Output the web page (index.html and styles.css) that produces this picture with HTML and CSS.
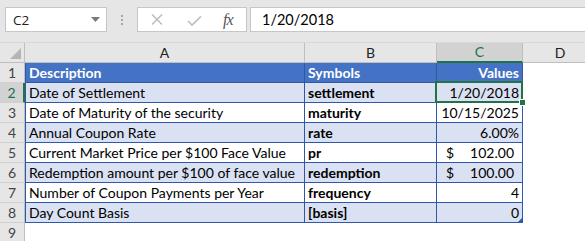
FILE: index.html
```html
<!DOCTYPE html>
<html lang="en">
<head>
    <meta charset="UTF-8">
    <title>Bond inputs</title>
    <link rel="stylesheet" href="styles.css">
</head>
<body>
    <div class="formula-bar">
        <div class="name-box">
            <span>C2</span>
            <svg class="caret" width="9" height="5" viewBox="0 0 9 5"><path d="M0 0h9L4.5 5z" fill="#7a7a7a"/></svg>
        </div>
        <div class="grip"><i></i><i></i><i></i></div>
        <div class="fx-box">
            <svg class="icon-cancel" width="12" height="11" viewBox="0 0 12 11"><path d="M1 0.5l10 10M11 0.5l-10 10" stroke="#bdbdbd" stroke-width="1.5" fill="none"/></svg>
            <svg class="icon-enter" width="15" height="10" viewBox="0 0 15 10"><path d="M1 5l4 4 9-8.5" stroke="#bdbdbd" stroke-width="1.7" fill="none"/></svg>
            <span class="fx">fx</span>
        </div>
        <div class="formula-input">1/20/2018</div>
    </div>

    <table class="sheet">
        <colgroup>
            <col class="col-head">
            <col class="col-a">
            <col class="col-b">
            <col class="col-c">
            <col class="col-d">
        </colgroup>
        <thead>
            <tr>
                <th class="corner"><span class="select-all"></span></th>
                <th>A</th>
                <th>B</th>
                <th class="active">C</th>
                <th>D</th>
            </tr>
        </thead>
        <tbody>
            <tr class="title">
                <th>1</th>
                <td class="first">Description</td>
                <td>Symbols</td>
                <td class="num">Values</td>
                <td class="blank"></td>
            </tr>
            <tr class="band">
                <th class="active">2</th>
                <td class="first">Date of Settlement</td>
                <td class="sym">settlement</td>
                <td class="num selected">1/20/2018<span class="cursor"><span class="handle"></span></span></td>
                <td class="blank"></td>
            </tr>
            <tr>
                <th>3</th>
                <td class="first">Date of Maturity of the security</td>
                <td class="sym">maturity</td>
                <td class="num">10/15/2025</td>
                <td class="blank"></td>
            </tr>
            <tr class="band">
                <th>4</th>
                <td class="first">Annual Coupon Rate</td>
                <td class="sym">rate</td>
                <td class="num">6.00%</td>
                <td class="blank"></td>
            </tr>
            <tr>
                <th>5</th>
                <td class="first">Current Market Price per $100 Face Value</td>
                <td class="sym">pr</td>
                <td class="money"><span>$</span><span>102.00</span></td>
                <td class="blank"></td>
            </tr>
            <tr class="band">
                <th>6</th>
                <td class="first">Redemption amount per $100 of face value</td>
                <td class="sym">redemption</td>
                <td class="money"><span>$</span><span>100.00</span></td>
                <td class="blank"></td>
            </tr>
            <tr>
                <th>7</th>
                <td class="first">Number of Coupon Payments per Year</td>
                <td class="sym">frequency</td>
                <td class="num">4</td>
                <td class="blank"></td>
            </tr>
            <tr class="band">
                <th>8</th>
                <td class="first">Day Count Basis</td>
                <td class="sym">[basis]</td>
                <td class="num last">0</td>
                <td class="blank"></td>
            </tr>
            <tr class="empty">
                <th>9</th>
                <td></td>
                <td></td>
                <td></td>
                <td></td>
            </tr>
        </tbody>
    </table>
</body>
</html>
```

FILE: styles.css
```css
:root {
    --chrome: #e6e6e6;
    --chrome-line: #c6c6c6;
    --head-line: #bfbfbf;
    --excel-green: #217346;
    --table-blue: #4472c4;
    --table-band: #d9e1f2;
    --table-line: #2f59a8;
    --cell-font: 'Lato', 'Liberation Sans', sans-serif;
}

* {
    box-sizing: border-box;
    margin: 0;
    padding: 0;
}

body {
    width: 585px;
    height: 241px;
    overflow: hidden;
    background: #ffffff;
    font-family: var(--cell-font);
    color: #000000;
}

/* formula bar */

.formula-bar {
    display: flex;
    align-items: flex-start;
    height: 43px;
    padding-top: 7px;
    padding-left: 5px;
    background: var(--chrome);
    border-bottom: 1px solid #d8d8d8;
}

.name-box {
    display: flex;
    align-items: center;
    justify-content: space-between;
    width: 102px;
    height: 25px;
    padding: 0 6px 0 7px;
    background: #ffffff;
    border: 1px solid var(--chrome-line);
    font-family: 'Open Sans', sans-serif;
    font-size: 13.5px;
    color: #222222;
}

.grip {
    display: flex;
    flex-direction: column;
    gap: 2px;
    margin: 8px 14px 0 14px;
}

.grip i {
    display: block;
    width: 2px;
    height: 2px;
    background: #a6a6a6;
}

.fx-box {
    display: flex;
    align-items: center;
    width: 110px;
    height: 25px;
    padding-left: 13px;
    background: #ffffff;
    border: 1px solid var(--chrome-line);
}

.icon-enter {
    margin-left: 24px;
    margin-top: 2px;
}

.fx {
    margin-left: 21px;
    font-family: 'Liberation Serif', serif;
    font-style: italic;
    font-size: 16px;
    color: #555555;
    letter-spacing: -1px;
}

.formula-input {
    flex: 1;
    height: 25px;
    margin-left: 3px;
    margin-right: -2px;
    padding-left: 11px;
    background: #ffffff;
    border: 1px solid var(--chrome-line);
    font-size: 14.5px;
    line-height: 23px;
}

/* grid */

.sheet {
    width: 597px;
    table-layout: fixed;
    border-collapse: separate;
    border-spacing: 0;
    font-size: 14px;
}

.col-head { width: 25px; }
.col-a { width: 280px; }
.col-b { width: 132px; }
.col-c { width: 86px; }
.col-d { width: 74px; }

.sheet thead th {
    height: 19px;
    background: var(--chrome);
    border-right: 1px solid var(--head-line);
    border-bottom: 1px solid var(--head-line);
    font-weight: 400;
    color: #222222;
    text-align: center;
    line-height: 18px;
}

.sheet thead th:last-child {
    border-right: none;
}

.sheet thead th.active {
    background: #d2d2d2;
    color: var(--excel-green);
    border-bottom: 2px solid var(--excel-green);
}

.corner {
    position: relative;
}

.select-all {
    position: absolute;
    right: 3px;
    bottom: 3px;
    width: 0;
    height: 0;
    border-left: 11px solid transparent;
    border-bottom: 11px solid #b4b4b4;
}

.sheet tbody th {
    height: 20px;
    background: var(--chrome);
    border-right: 1px solid var(--head-line);
    border-bottom: 1px solid #d0d0d0;
    font-weight: 400;
    color: #444444;
    text-align: center;
    line-height: 19px;
}

.sheet tbody th.active {
    background: #d2d2d2;
    color: var(--excel-green);
    border-right: 2px solid var(--excel-green);
}

.sheet td {
    height: 20px;
    padding: 0 3px;
    line-height: 19px;
    white-space: nowrap;
    overflow: visible;
    vertical-align: bottom;
}

tbody tr:not(.empty) td {
    border-right: 1px solid var(--table-line);
    border-bottom: 1px solid var(--table-line);
}

.sheet td.first {
    border-left: 1px solid var(--table-line);
}

.sheet td.blank {
    border: none;
    background: #ffffff;
}

.title td {
    background: var(--table-blue);
    color: #ffffff;
    font-weight: 700;
}

.band td {
    background: var(--table-band);
}

.sym {
    font-weight: 700;
}

.num {
    text-align: right;
}

.money span:first-child {
    float: left;
    padding-left: 6px;
}

.money span:last-child {
    float: right;
    padding-right: 5px;
}

.selected,
.last {
    position: relative;
}

.cursor {
    position: absolute;
    left: -2px;
    top: -2px;
    right: -1px;
    bottom: -1px;
    border: 2px solid var(--excel-green);
}

.handle {
    position: absolute;
    right: -5px;
    bottom: -5px;
    width: 7px;
    height: 7px;
    background: var(--excel-green);
    border: 1px solid #ffffff;
}

.last::after {
    content: "";
    position: absolute;
    right: 0;
    bottom: 0;
    border-left: 4px solid transparent;
    border-bottom: 4px solid var(--table-line);
}
```
